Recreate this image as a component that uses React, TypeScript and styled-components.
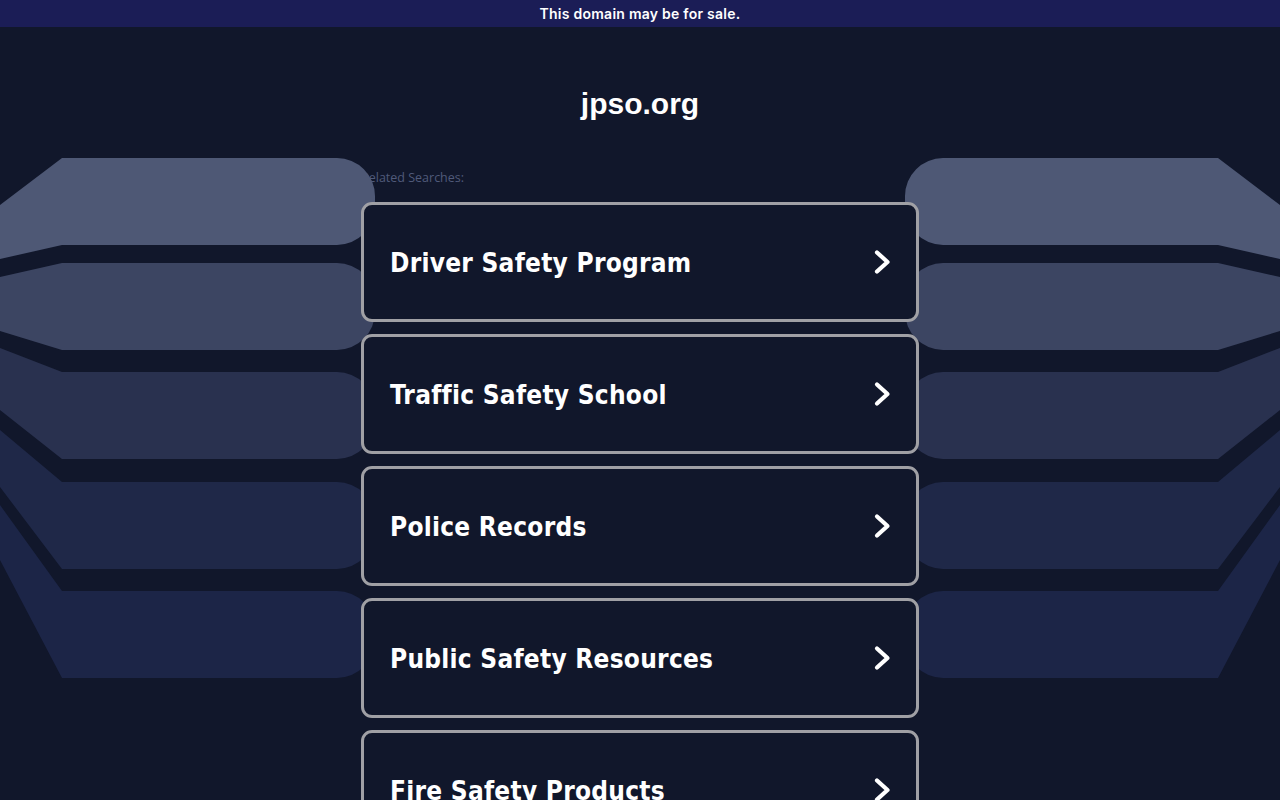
import React from "react";
import styled, { createGlobalStyle } from "styled-components";

const GlobalStyle = createGlobalStyle`
  html, body {
    margin: 0;
    padding: 0;
    background: #11172b;
  }
  body {
    font-family: "Open Sans", "Liberation Sans", sans-serif;
    color: #ffffff;
  }
`;

const Page = styled.div`
  position: relative;
  height: 800px;
  overflow: hidden;
  display: flex;
  flex-direction: column;
  align-items: center;
`;

const TopBar = styled.div`
  align-self: stretch;
  flex-shrink: 0;
  height: 27px;
  background: #1b1d56;
  display: flex;
  align-items: center;
  justify-content: center;
  font-family: "Inter", "Open Sans", sans-serif;
  font-weight: 600;
  font-size: 14px;
  letter-spacing: 0.25px;
  color: #ffffff;
`;

const Title = styled.h1`
  margin: 60px 0 0;
  font-family: "Liberation Sans", Arial, sans-serif;
  font-weight: 700;
  font-size: 30px;
  line-height: 34px;
  color: #ffffff;
`;

const Content = styled.div`
  width: 558px;
  margin-top: 48px;
  display: flex;
  flex-direction: column;
  flex-shrink: 0;
`;

const RelatedLabel = styled.div`
  position: relative;
  z-index: 0;
  font-family: "Open Sans", "Liberation Sans", sans-serif;
  font-size: 12.5px;
  line-height: 17px;
  color: #505a7a;
  margin-bottom: 16px;
`;

const CardList = styled.div`
  position: relative;
  z-index: 2;
  display: flex;
  flex-direction: column;
  gap: 12px;
`;

const Card = styled.a`
  box-sizing: border-box;
  height: 120px;
  border: 3px solid #a0a0a5;
  border-radius: 11px;
  background: #11172b;
  display: flex;
  align-items: center;
  justify-content: space-between;
  padding: 0 25px 0 26px;
  text-decoration: none;
  color: #ffffff;
`;

const CardText = styled.span`
  font-family: "DejaVu Sans Condensed", "DejaVu Sans", Verdana, sans-serif;
  font-stretch: condensed;
  font-weight: 700;
  font-size: 26px;
  letter-spacing: 0.25px;
  line-height: 30px;
  padding-top: 2px;
  color: #ffffff;
`;

const Decor = styled.svg`
  position: absolute;
  left: 0;
  top: 0;
  z-index: 1;
  pointer-events: none;
`;

const bands = [
  { T: 158, a: 205, b: 259, color: "#4e5875" },
  { T: 263, a: 277, b: 331, color: "#3c4562" },
  { T: 372, a: 348, b: 410, color: "#29314f" },
  { T: 482, a: 430, b: 487, color: "#1f2848" },
  { T: 591, a: 505, b: 560, color: "#1c2547" },
];

const bandPath = (T: number, a: number, b: number) => {
  const B = T + 87;
  const r = 38;
  return `M 0 ${a} L 62 ${T} L ${375 - r} ${T} A ${r} ${r} 0 0 1 375 ${T + r} L 375 ${B - r} A ${r} ${r} 0 0 1 ${375 - r} ${B} L 62 ${B} L 0 ${b} Z`;
};

const Chevron = () => (
  <svg width="18" height="26" viewBox="0 0 18 26" fill="none">
    <path
      d="M4 3.5 L14.5 13 L4 22.5"
      stroke="#ffffff"
      strokeWidth="4.2"
      strokeLinecap="round"
      strokeLinejoin="round"
    />
  </svg>
);

const items = [
  "Driver Safety Program",
  "Traffic Safety School",
  "Police Records",
  "Public Safety Resources",
  "Fire Safety Products",
];

export default function App() {
  return (
    <>
      <GlobalStyle />
      <Page>
        <Decor width="1280" height="800" viewBox="0 0 1280 800">
          <g>
            {bands.map((bd, i) => (
              <path key={`l${i}`} d={bandPath(bd.T, bd.a, bd.b)} fill={bd.color} />
            ))}
          </g>
          <g transform="translate(1280 0) scale(-1 1)">
            {bands.map((bd, i) => (
              <path key={`r${i}`} d={bandPath(bd.T, bd.a, bd.b)} fill={bd.color} />
            ))}
          </g>
        </Decor>
        <TopBar>This domain may be for sale.</TopBar>
        <Title>jpso.org</Title>
        <Content>
          <RelatedLabel>Related Searches:</RelatedLabel>
          <CardList>
            {items.map((t) => (
              <Card key={t} href="#">
                <CardText>{t}</CardText>
                <Chevron />
              </Card>
            ))}
          </CardList>
        </Content>
      </Page>
    </>
  );
}
